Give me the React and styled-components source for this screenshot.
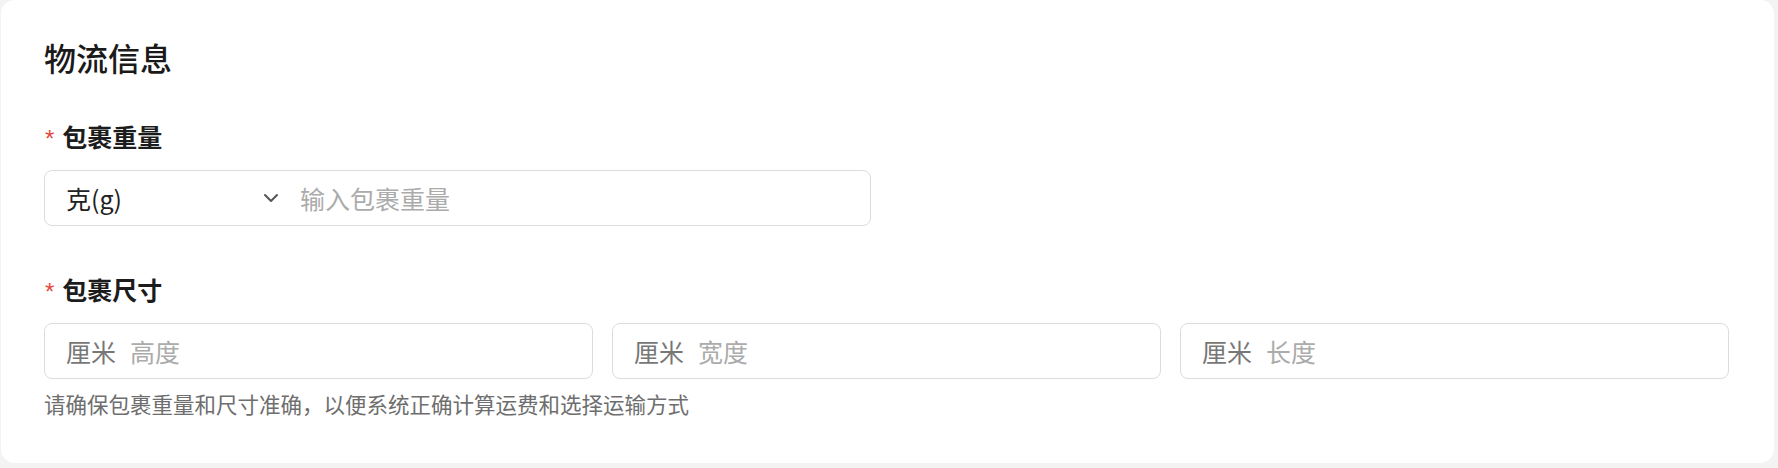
import styled, { createGlobalStyle } from 'styled-components';

const GlobalStyle = createGlobalStyle`
  html, body {
    margin: 0;
    padding: 0;
    background: #f3f3f3;
  }
  body {
    font-family: "Noto Sans CJK SC", "Noto Sans", sans-serif;
  }
  * {
    box-sizing: border-box;
  }
`;

const Card = styled.section`
  margin: 0 4px 5px 1px;
  background: #ffffff;
  border-radius: 14px;
  padding: 37px 45px 44px 43px;
`;

const Title = styled.h2`
  margin: 0;
  font-size: 32px;
  line-height: 40px;
  font-weight: 500;
  color: #1a1a1a;
`;

const Field = styled.div`
  margin-top: ${(p) => p.$top}px;
`;

const Label = styled.div`
  display: flex;
  align-items: center;
  height: 34px;
  font-size: 25px;
  font-weight: 700;
  color: #1c1c1c;
  margin-left: 1px;
`;

const Required = styled.span`
  color: #e5483d;
  font-family: "Liberation Sans", sans-serif;
  font-size: 24px;
  font-weight: 400;
  margin-right: 8px;
  position: relative;
  top: 3px;
`;

const InputBox = styled.div`
  display: flex;
  align-items: center;
  height: 56px;
  margin-top: 17px;
  width: ${(p) => p.$width || 'auto'};
  flex: ${(p) => (p.$grow ? 1 : 'none')};
  border: 1px solid #dcdcdc;
  border-radius: 8px;
  background: #fff;
  padding: 0 21px;
  font-size: 25px;
`;

const UnitSelect = styled.div`
  display: flex;
  align-items: center;
  justify-content: space-between;
  width: 213px;
  color: #222;
  margin-right: 21px;

  svg {
    flex: none;
  }
`;

const Placeholder = styled.span`
  color: #ababab;
`;

const Prefix = styled.span`
  color: #777;
  margin-right: 14px;
`;

const SizeRow = styled.div`
  display: flex;
  gap: 19px;
`;

const Hint = styled.p`
  margin: 10px 0 0;
  font-size: 21.5px;
  line-height: 30px;
  color: #6e6e6e;
`;

const Chevron = () => (
  <svg width="16" height="10" viewBox="0 0 16 10" fill="none">
    <path d="M2 2l6 6 6-6" stroke="#555" strokeWidth="2" strokeLinecap="round" strokeLinejoin="round" />
  </svg>
);

const App = () => {
  const sizes = ['高度', '宽度', '长度'];

  return (
    <>
      <GlobalStyle />
      <Card>
        <Title>物流信息</Title>

        <Field $top={42}>
          <Label>
            <Required>*</Required>包裹重量
          </Label>
          <InputBox $width="827px">
            <UnitSelect>
              <span>克(g)</span>
              <Chevron />
            </UnitSelect>
            <Placeholder>输入包裹重量</Placeholder>
          </InputBox>
        </Field>

        <Field $top={46}>
          <Label>
            <Required>*</Required>包裹尺寸
          </Label>
          <SizeRow>
            {sizes.map((s) => (
              <InputBox key={s} $grow>
                <Prefix>厘米</Prefix>
                <Placeholder>{s}</Placeholder>
              </InputBox>
            ))}
          </SizeRow>
          <Hint>请确保包裹重量和尺寸准确，以便系统正确计算运费和选择运输方式</Hint>
        </Field>
      </Card>
    </>
  );
};

export default App;
